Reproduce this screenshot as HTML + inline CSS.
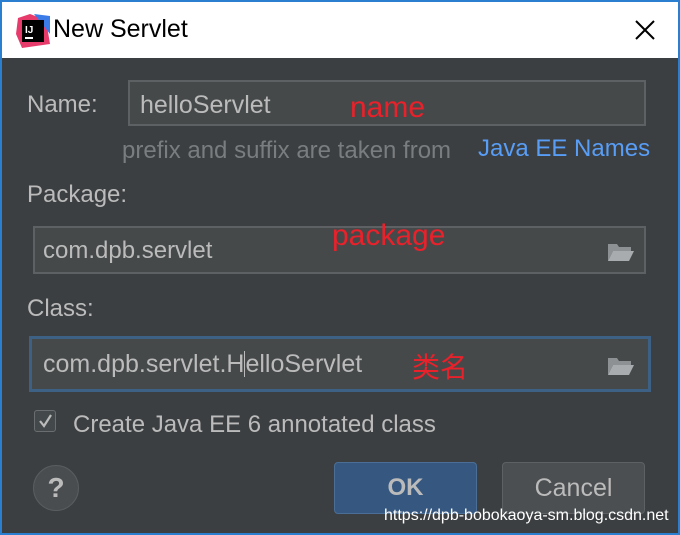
<!DOCTYPE html>
<html><head><meta charset="utf-8"><style>
body{margin:0;width:680px;height:535px;overflow:hidden;font-family:"Liberation Sans","Noto Sans CJK SC",sans-serif}
.win{position:absolute;left:0;top:0;width:676px;height:531px;border:2px solid #2b7fd1;background:#3c3f41}
.title{position:absolute;left:0;top:0;width:676px;height:56px;background:#fff}
.t{position:absolute;font-size:24px;color:#bbbbbb;white-space:nowrap}
.in{position:absolute;border:2px solid #5e6163;background:#45494a;box-sizing:border-box}
.red{position:absolute;color:#e8212b;font-size:30px}
.fold{position:absolute;width:28px;height:20px}
</style></head><body>
<div class="win">
<div class="title">
 <svg style="position:absolute;left:14px;top:12px" width="34" height="34" viewBox="0 0 34 34">
  <polygon points="2,4 14,0 30,6 34,30 6,34 0,20" fill="#e73b6b"/>
  <polygon points="18,0 34,2 34,20" fill="#3b7be8"/>
  <rect x="6" y="6" width="22" height="22" fill="#000"/>
  <text x="9" y="19" font-size="10" font-weight="bold" fill="#fff" font-family="Liberation Sans">IJ</text>
  <rect x="9" y="23" width="8" height="2" fill="#fff"/>
 </svg>
 <div style="position:absolute;left:51px;top:13px;font-size:25px;color:#000">New Servlet</div>
 <svg style="position:absolute;left:633px;top:18px" width="20" height="20"><path d="M1 1L19 19M19 1L1 19" stroke="#000" stroke-width="2"/></svg>
</div>
<div class="t" style="left:25px;top:89px">Name:</div>
<div class="in" style="left:126px;top:78px;width:518px;height:46px"></div>
<div class="t" style="left:138px;top:89px;font-size:25px">helloServlet</div>
<div class="red" style="left:348px;top:89px">name</div>
<div class="t" style="left:120px;top:135px;font-size:24px;color:#7a7d7f">prefix and suffix are taken from</div>
<div class="t" style="left:476px;top:133px;color:#589df6">Java EE Names</div>
<div class="t" style="left:25px;top:179px">Package:</div>
<div class="in" style="left:31px;top:224px;width:613px;height:48px"></div>
<div class="t" style="left:41px;top:235px">com.dpb.servlet</div>
<div class="red" style="left:330px;top:217px">package</div>
<svg class="fold" style="left:605px;top:240px" viewBox="0 0 28 20"><path d="M1 2h9l2 3h12v4H6L1 19z" fill="#8d9194"/><path d="M6 9h21l-5 10H1z" fill="#a8acae"/></svg>
<div class="t" style="left:25px;top:293px">Class:</div>
<div class="in" style="left:27px;top:334px;width:622px;height:56px;border:3px solid #3d6185"></div>
<div class="t" style="left:41px;top:348px;font-size:25px">com.dpb.servlet.H<span style="display:inline-block;width:1px;height:26px;background:#bbb;vertical-align:-5px"></span>elloServlet</div>
<div class="red" style="left:410px;top:344px;font-size:28px">类名</div>
<svg class="fold" style="left:605px;top:354px" viewBox="0 0 28 20"><path d="M1 2h9l2 3h12v4H6L1 19z" fill="#8d9194"/><path d="M6 9h21l-5 10H1z" fill="#a8acae"/></svg>
<div style="position:absolute;left:32px;top:408px;width:20px;height:20px;border:1px solid #6b6e70;border-radius:3px;background:#43494a"></div>
<svg style="position:absolute;left:34px;top:410px" width="18" height="18"><path d="M4 9l4 5 7-11" stroke="#bbb" stroke-width="2.2" fill="none"/></svg>
<div class="t" style="left:71px;top:409px">Create Java EE 6 annotated class</div>
<div style="position:absolute;left:31px;top:463px;width:44px;height:44px;border-radius:50%;background:#4a4d4f;border:1px solid #5a5d5f;color:#bbb;font-size:28px;font-weight:bold;text-align:center;line-height:44px">?</div>
<div style="position:absolute;left:332px;top:460px;width:143px;height:52px;box-sizing:border-box;border:1px solid #4a6e95;border-radius:4px;background:#365880;color:#bbb;font-size:24px;font-weight:bold;text-align:center;line-height:50px">OK</div>
<div style="position:absolute;left:500px;top:460px;width:143px;height:52px;box-sizing:border-box;border:1px solid #5e6163;border-radius:4px;background:#4b4f51;color:#bbb;font-size:25px;text-align:center;line-height:50px">Cancel</div>
<div style="position:absolute;left:382px;top:505px;font-size:16px;color:#fff;white-space:nowrap">https://dpb-bobokaoya-sm.blog.csdn.net</div>
</div>
</body></html>
